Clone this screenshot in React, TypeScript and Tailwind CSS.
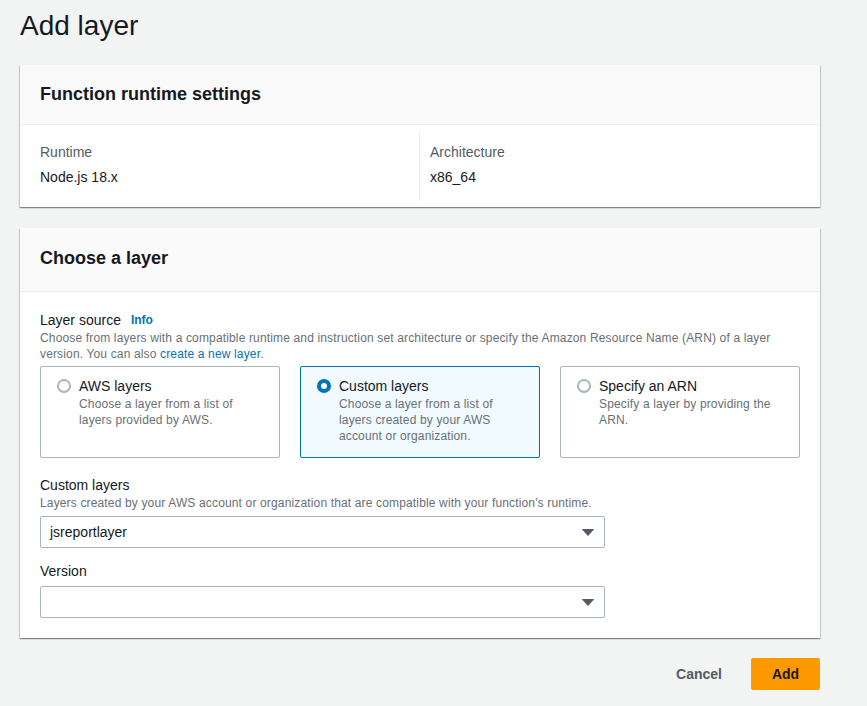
import { useState } from "react";

const cardShadow =
  "shadow-[0_1px_1px_0_rgba(0,28,36,0.3),1px_1px_1px_0_rgba(0,28,36,0.15),-1px_1px_1px_0_rgba(0,28,36,0.15)]";

function Radio({ checked }: { checked: boolean }) {
  if (checked) {
    return (
      <span className="mt-[3px] flex h-[14px] w-[14px] shrink-0 items-center justify-center rounded-full bg-[#0073bb]">
        <span className="h-[6px] w-[6px] rounded-full bg-white" />
      </span>
    );
  }
  return <span className="mt-[3px] h-[14px] w-[14px] shrink-0 rounded-full border-2 border-[#aab7b8] bg-white" />;
}

function Tile({
  title,
  desc,
  checked,
  onClick,
}: {
  title: string;
  desc: string;
  checked: boolean;
  onClick: () => void;
}) {
  return (
    <button
      type="button"
      onClick={onClick}
      className={
        checked
          ? "flex h-[92px] items-start gap-2 rounded-[2px] border border-[#0073bb] bg-[#f1faff] pl-4 pr-4 pt-[9px] text-left"
          : "flex h-[92px] items-start gap-2 rounded-[2px] border border-[#aab7b8] bg-white pl-4 pr-4 pt-[9px] text-left"
      }
    >
      <Radio checked={checked} />
      <div>
        <div className="text-[14px] leading-[20px] text-[#16191f]">{title}</div>
        <div className="text-[12px] leading-[16px] tracking-[0.15px] text-[#687078]">{desc}</div>
      </div>
    </button>
  );
}

function Select({ value }: { value: string }) {
  return (
    <div className="flex h-[32px] w-[565px] items-center justify-between rounded-[2px] border border-[#aab7b8] bg-white pl-[9px] pr-[9px]">
      <span className="text-[14px] text-[#16191f]">{value}</span>
      <svg width="12" height="7" viewBox="0 0 12 7" className="mr-[1px]">
        <path d="M0.5 0.5h11L6 6.5z" fill="#545b64" stroke="#545b64" strokeLinejoin="round" />
      </svg>
    </div>
  );
}

export default function App() {
  const [source, setSource] = useState("custom");

  return (
    <div
      className="min-h-[706px] bg-[#f2f3f3] pl-5 pt-[8px] text-[#16191f]"
      style={{ fontFamily: '"Liberation Sans", Arial, sans-serif' }}
    >
      <h1 className="h-9 text-[28px] leading-[36px] font-normal">Add layer</h1>

      <div className={`mt-[21px] w-[800px] bg-white ${cardShadow}`}>
        <div className="flex h-[60px] items-center border-b border-[#eaeded] bg-[#fafafa] px-5">
          <h2 className="text-[18px] font-bold">Function runtime settings</h2>
        </div>
        <div className="grid grid-cols-2 px-5 py-[6px]">
          <div className="flex flex-col gap-[3px] border-r border-[#eaeded] pt-[10px] pb-[13px]">
            <span className="text-[14px] leading-[22px] text-[#545b64]">Runtime</span>
            <span className="text-[14px] leading-[22px] text-[#16191f]">Node.js 18.x</span>
          </div>
          <div className="flex flex-col gap-[3px] pl-[10px] pt-[10px] pb-[13px]">
            <span className="text-[14px] leading-[22px] text-[#545b64]">Architecture</span>
            <span className="text-[14px] leading-[22px] text-[#16191f]">x86_64</span>
          </div>
        </div>
      </div>

      <div className={`mt-[21px] w-[800px] bg-white ${cardShadow}`}>
        <div className="flex h-[64px] items-center border-b border-[#eaeded] bg-[#fafafa] px-5 pb-[2px]">
          <h2 className="text-[18px] font-bold">Choose a layer</h2>
        </div>
        <div className="px-5 pt-[18px] pb-[20px]">
          <div className="flex items-center gap-[10px] text-[14px] leading-[20px]">
            <span>Layer source</span>
            <span className="text-[12px] font-bold text-[#0073bb]">Info</span>
          </div>
          <p className="text-[12px] leading-[16px] tracking-[0.15px] text-[#687078]">
            Choose from layers with a compatible runtime and instruction set architecture or specify the Amazon
            Resource Name (ARN) of a layer version. You can also{" "}
            <span className="text-[#0073bb]">create a new layer</span>.
          </p>
          <div className="mt-[4px] grid grid-cols-3 gap-5">
            <Tile
              title="AWS layers"
              desc="Choose a layer from a list of layers provided by AWS."
              checked={source === "aws"}
              onClick={() => setSource("aws")}
            />
            <Tile
              title="Custom layers"
              desc="Choose a layer from a list of layers created by your AWS account or organization."
              checked={source === "custom"}
              onClick={() => setSource("custom")}
            />
            <Tile
              title="Specify an ARN"
              desc="Specify a layer by providing the ARN."
              checked={source === "arn"}
              onClick={() => setSource("arn")}
            />
          </div>

          <div className="mt-[17px] text-[14px] leading-[20px]">Custom layers</div>
          <p className="text-[12px] leading-[16px] tracking-[0.15px] text-[#687078]">
            Layers created by your AWS account or organization that are compatible with your function's runtime.
          </p>
          <div className="mt-[5px]">
            <Select value="jsreportlayer" />
          </div>

          <div className="mt-[13px] text-[14px] leading-[20px]">Version</div>
          <div className="mt-[5px]">
            <Select value="" />
          </div>
        </div>
      </div>

      <div className="flex w-[800px] items-center justify-end gap-[29px] pt-5">
        <button type="button" className="text-[14px] font-bold text-[#545b64]">
          Cancel
        </button>
        <button
          type="button"
          className="h-8 w-[69px] rounded-[2px] bg-[#ff9900] text-[14px] font-bold text-[#16191f]"
        >
          Add
        </button>
      </div>
    </div>
  );
}
